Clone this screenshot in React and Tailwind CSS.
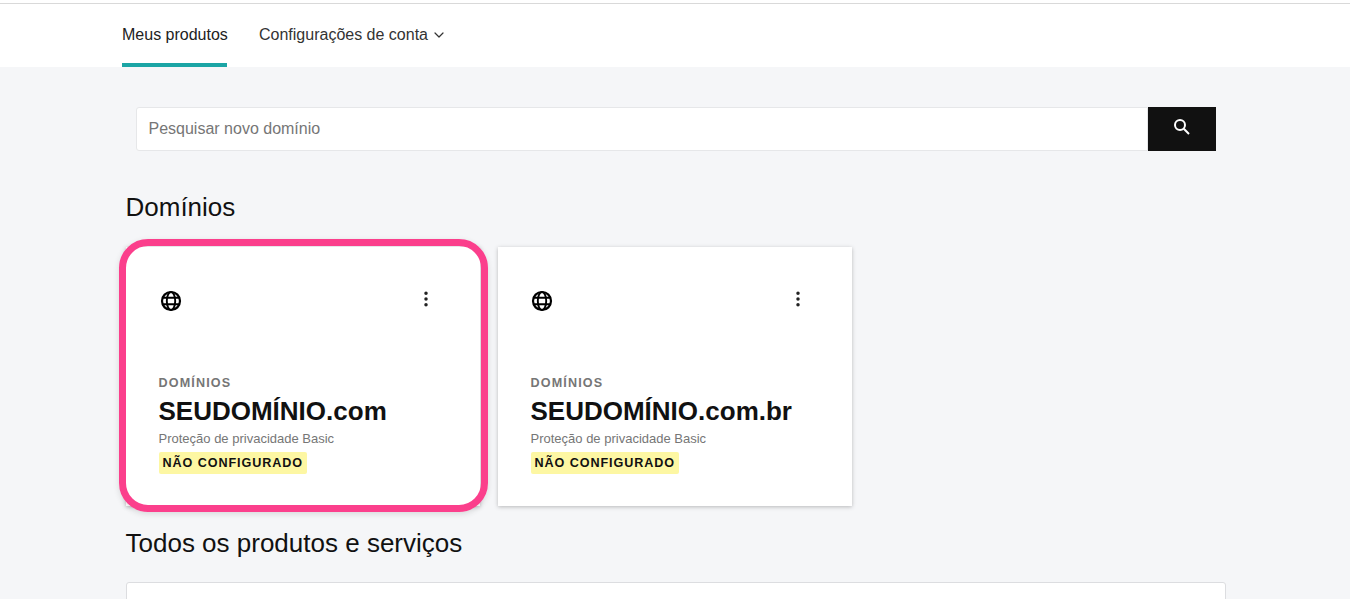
import React from "react";
import { ChevronDown, EllipsisVertical } from "lucide-react";

function Globe() {
  return (
    <svg width="24" height="24" viewBox="0 0 24 24" fill="none" stroke="#000" strokeWidth="2.2" className="block">
      <circle cx="12" cy="12" r="9" />
      <ellipse cx="12" cy="12" rx="4.2" ry="9" strokeWidth="1.9" />
      <path d="M3.5 8.7h17M3.5 15.3h17" strokeWidth="1.9" />
    </svg>
  );
}

function SearchGlyph() {
  return (
    <svg width="20" height="20" viewBox="0 0 20 20" fill="none" stroke="#fff" strokeWidth="2" className="block -mt-[5px]">
      <circle cx="8" cy="8" r="5" />
      <path d="M11.8 11.8 17 17" />
    </svg>
  );
}

function Card({ domain, highlighted }) {
  return (
    <div className="relative w-[354px] h-[259px] bg-white shadow-[0_1px_4px_rgba(0,0,0,0.25)] pl-[32.5px] pr-[32px] pt-[42px] flex flex-col">
      {highlighted && (
        <div className="absolute -left-[7px] -right-[8px] -top-[8px] -bottom-[6px] border-[7px] border-[#fb3f8c] rounded-[29px] bg-transparent shadow-[0_2px_6px_rgba(0,0,0,0.12)]" />
      )}
      <div className="flex justify-between items-start h-[24px]">
        <div className={highlighted ? "ml-[0.5px]" : "-ml-[0.5px]"}>
          <Globe />
        </div>
        <div className="mr-[12px] text-[#222]">
          <EllipsisVertical size={20} strokeWidth={2.2} />
        </div>
      </div>
      <div className="mt-[62px] text-[12.6px] leading-[16px] font-bold tracking-[1.15px] text-[#767676]">DOMÍNIOS</div>
      <div className="mt-[3px] text-[26px] leading-[34px] font-bold text-[#111]">{domain}</div>
      <div className="mt-[2px] text-[13px] leading-[18px] text-[#767676]">Proteção de privacidade Basic</div>
      <div className="mt-[4px] self-start h-[22px] px-[4px] rounded-[2px] bg-[#fdf7a3] text-[12.6px] leading-[22px] font-bold tracking-[0.92px] text-[#111]">
        NÃO CONFIGURADO
      </div>
    </div>
  );
}

export default function App() {
  return (
    <div className="h-[599px] overflow-hidden bg-[#f5f6f8] font-['Liberation_Sans',Arial,sans-serif] text-[#111]">
      <div className="h-[4px] bg-white border-b border-[#d9d9d9]" />
      <nav className="h-[63px] bg-white pl-[122px] flex items-start gap-[32px]">
        <div className="w-[105px] whitespace-nowrap h-[63px] border-b-[4px] border-[#1ba5a5] pt-[21px] text-[16px] leading-[20px] text-[#222]">Meus produtos</div>
        <div className="pt-[21px] flex items-center gap-[3px] text-[16px] leading-[20px] text-[#333]">
          Configurações de conta
          <ChevronDown size={16} strokeWidth={1.8} />
        </div>
      </nav>
      <main className="w-[1100px] ml-[126px]">
        <div className="mt-[40px] mx-[10px] h-[44px] flex">
          <div className="flex-1 bg-white border border-[#e6e7e9] rounded-l-[3px] pl-[11.5px] text-[16px] leading-[42px] text-[#767676]">
            Pesquisar novo domínio
          </div>
          <div className="w-[68px] bg-[#111] flex items-center justify-center">
            <SearchGlyph />
          </div>
        </div>
        <h2 className="mt-[40px] -ml-[0.5px] text-[26px] leading-[32px] font-normal">Domínios</h2>
        <div className="mt-[24px] flex gap-[18px]">
          <Card domain="SEUDOMÍNIO.com" highlighted />
          <Card domain="SEUDOMÍNIO.com.br" />
        </div>
        <h2 className="mt-[21px] -ml-[0.5px] text-[26px] leading-[32px] font-normal">Todos os produtos e serviços</h2>
        <div className="mt-[23px] h-[100px] bg-white border border-[#dcdde0] rounded-[3px]" />
      </main>
    </div>
  );
}
